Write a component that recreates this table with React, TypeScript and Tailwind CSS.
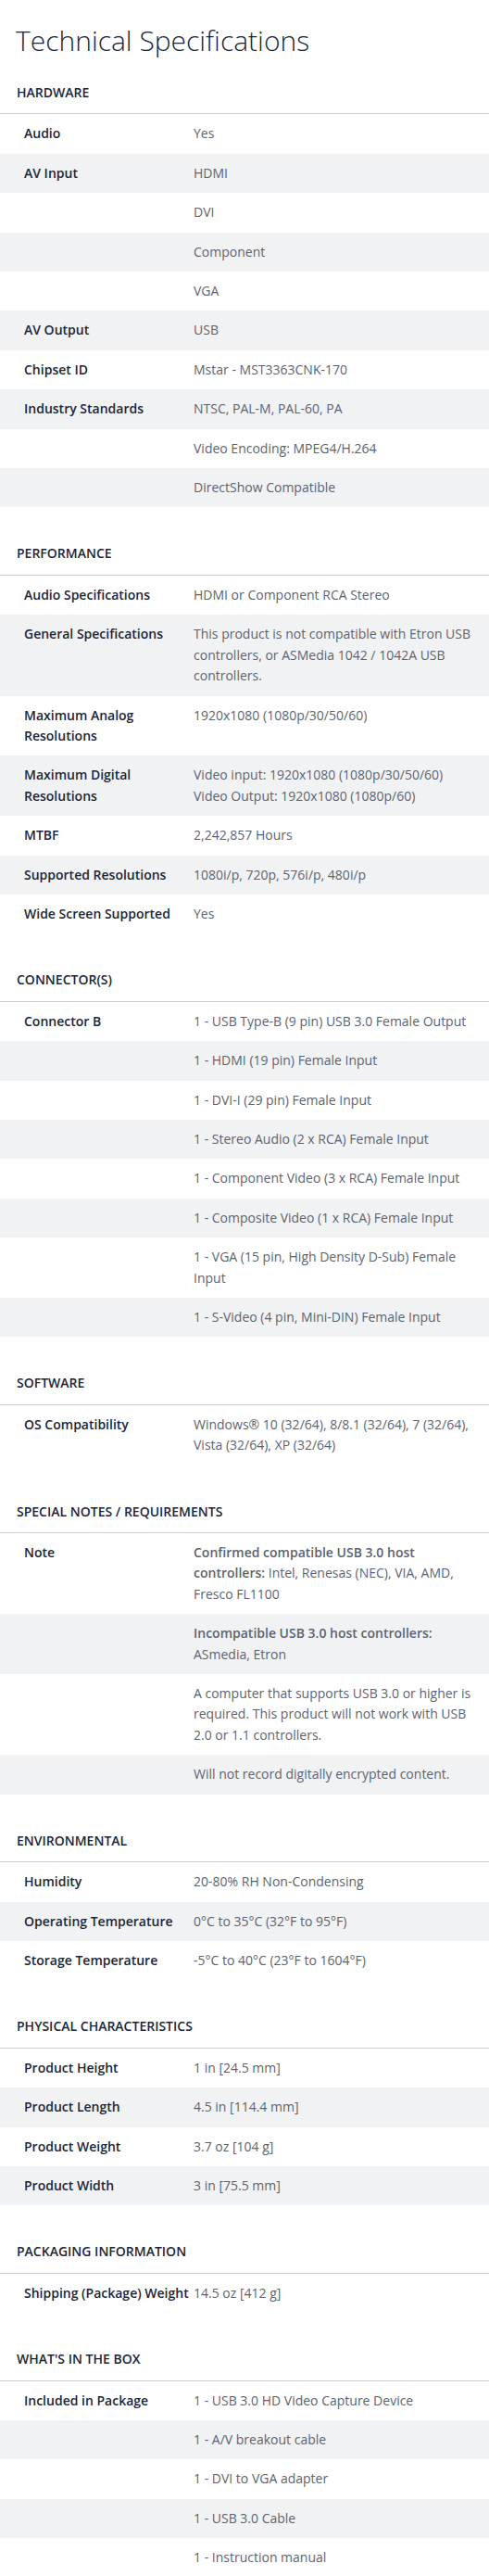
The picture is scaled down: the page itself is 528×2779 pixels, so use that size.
import React from "react";

type Row = { label?: string; value: React.ReactNode; nowrap?: boolean };
type Section = { title: string; rows: Row[] };

const sections: Section[] = [
  {
    title: "Hardware",
    rows: [
      { label: "Audio", value: "Yes" },
      { label: "AV Input", value: "HDMI" },
      { value: "DVI" },
      { value: "Component" },
      { value: "VGA" },
      { label: "AV Output", value: "USB" },
      { label: "Chipset ID", value: "Mstar - MST3363CNK-170" },
      { label: "Industry Standards", value: "NTSC, PAL-M, PAL-60, PA" },
      { value: "Video Encoding: MPEG4/H.264" },
      { value: "DirectShow Compatible" },
    ],
  },
  {
    title: "Performance",
    rows: [
      { label: "Audio Specifications", value: "HDMI or Component RCA Stereo" },
      {
        label: "General Specifications",
        value: "This product is not compatible with Etron USB controllers, or ASMedia 1042 / 1042A USB controllers.",
      },
      { label: "Maximum Analog Resolutions", value: "1920x1080 (1080p/30/50/60)" },
      {
        label: "Maximum Digital Resolutions",
        value: (
          <>
            Video input: 1920x1080 (1080p/30/50/60)
            <br />
            Video Output: 1920x1080 (1080p/60)
          </>
        ),
      },
      { label: "MTBF", value: "2,242,857 Hours" },
      { label: "Supported Resolutions", value: "1080i/p, 720p, 576i/p, 480i/p" },
      { label: "Wide Screen Supported", value: "Yes" },
    ],
  },
  {
    title: "Connector(s)",
    rows: [
      { label: "Connector B", value: "1 - USB Type-B (9 pin) USB 3.0 Female Output" },
      { value: "1 - HDMI (19 pin) Female Input" },
      { value: "1 - DVI-I (29 pin) Female Input" },
      { value: "1 - Stereo Audio (2 x RCA) Female Input" },
      { value: "1 - Component Video (3 x RCA) Female Input" },
      { value: "1 - Composite Video (1 x RCA) Female Input" },
      { value: "1 - VGA (15 pin, High Density D-Sub) Female Input" },
      { value: "1 - S-Video (4 pin, Mini-DIN) Female Input" },
    ],
  },
  {
    title: "Software",
    rows: [
      {
        label: "OS Compatibility",
        value: "Windows® 10 (32/64), 8/8.1 (32/64), 7 (32/64), Vista (32/64), XP (32/64)",
      },
    ],
  },
  {
    title: "Special Notes / Requirements",
    rows: [
      {
        label: "Note",
        value: (
          <>
            <strong className="font-semibold">Confirmed compatible USB 3.0 host controllers:</strong> Intel, Renesas
            (NEC), VIA, AMD, Fresco FL1100
          </>
        ),
      },
      {
        value: (
          <>
            <strong className="font-semibold">Incompatible USB 3.0 host controllers:</strong> ASmedia, Etron
          </>
        ),
      },
      {
        value: "A computer that supports USB 3.0 or higher is required. This product will not work with USB 2.0 or 1.1 controllers.",
      },
      { value: "Will not record digitally encrypted content." },
    ],
  },
  {
    title: "Environmental",
    rows: [
      { label: "Humidity", value: "20-80% RH Non-Condensing" },
      { label: "Operating Temperature", value: "0°C to 35°C (32°F to 95°F)" },
      { label: "Storage Temperature", value: "-5°C to 40°C (23°F to 1604°F)" },
    ],
  },
  {
    title: "Physical Characteristics",
    rows: [
      { label: "Product Height", value: "1 in [24.5 mm]" },
      { label: "Product Length", value: "4.5 in [114.4 mm]" },
      { label: "Product Weight", value: "3.7 oz [104 g]" },
      { label: "Product Width", value: "3 in [75.5 mm]" },
    ],
  },
  {
    title: "Packaging Information",
    rows: [{ label: "Shipping (Package) Weight", value: "14.5 oz [412 g]", nowrap: true }],
  },
  {
    title: "What's in the Box",
    rows: [
      { label: "Included in Package", value: "1 - USB 3.0 HD Video Capture Device" },
      { value: "1 - A/V breakout cable" },
      { value: "1 - DVI to VGA adapter" },
      { value: "1 - USB 3.0 Cable" },
      { value: "1 - Instruction manual" },
    ],
  },
];

function SpecSection({ section }: { section: Section }) {
  return (
    <section className="mt-[39px] first:mt-[27px]">
      <h2 className="pl-[18px] pb-[11px] border-b border-[#cccccc] text-[14px] leading-[22.4px] font-semibold uppercase text-[#1b2638]">
        {section.title}
      </h2>
      <div>
        {section.rows.map((row, i) => (
          <div key={i} className="grid grid-cols-[209px_1fr] even:bg-[#f1f2f4]">
            {/* the shipping label fills its column in the original table, keep it on one line */}
            <div
              className={
                row.nowrap
                  ? "pl-[26px] py-[10px] whitespace-nowrap font-semibold text-[#1b2638]"
                  : "pl-[26px] pr-2 py-[10px] font-semibold text-[#1b2638]"
              }
            >
              {row.label}
            </div>
            <div className="pr-[18px] py-[10px] text-[#5c6370]">{row.value}</div>
          </div>
        ))}
      </div>
    </section>
  );
}

export default function App() {
  return (
    <div className="min-h-screen bg-white font-['Open_Sans',sans-serif] text-[14px] leading-[22.4px]">
      <h1 className="px-[17px] pt-[26px] text-[30px] leading-[36px] font-light text-[#1b2638]">
        Technical Specifications
      </h1>
      <div>
        {sections.map((s) => (
          <SpecSection key={s.title} section={s} />
        ))}
      </div>
    </div>
  );
}
